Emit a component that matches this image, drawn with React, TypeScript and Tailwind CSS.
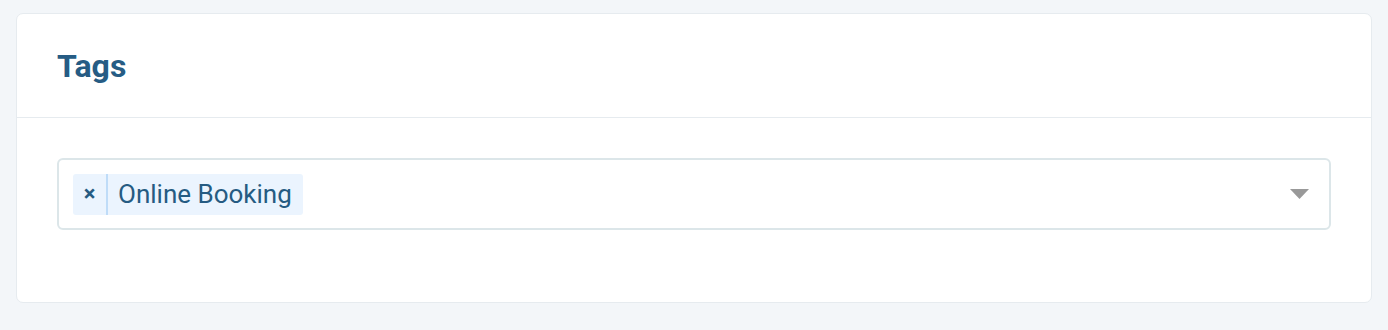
export default function App() {
  return (
    <div className="min-h-[330px] w-full bg-[#f3f6f9] px-4 pt-[13px] pb-7 font-['Roboto',sans-serif]">
      <div className="overflow-hidden rounded-[7px] border border-[#e6ebef] bg-white">
        {/* Header */}
        <div className="flex h-[104px] items-center border-b border-[#e6ebef] px-10">
          <h2 className="text-[32px] font-bold leading-none text-[#265c84]">Tags</h2>
        </div>
        {/* Body */}
        <div className="px-10 pt-10 pb-[72px]">
          <div className="flex h-[72px] items-center justify-between rounded-[6px] border-2 border-[#dce6e9] pl-[14px] pr-[20px]">
            <div className="flex h-[41px] items-stretch rounded-[3px] bg-[#ebf4fe] text-[#255b82]">
              <span className="flex w-[35px] items-center justify-center border-r-2 border-[#bfdcf8] text-[22px] font-bold leading-none">
                ×
              </span>
              <span className="flex items-center pl-[10px] pr-[11px] text-[26px] leading-none">Online Booking</span>
            </div>
            <svg width="19" height="10" viewBox="0 0 19 10">
              <path d="M0 0 L19 0 L9.5 10 Z" fill="#999999" />
            </svg>
          </div>
        </div>
      </div>
    </div>
  );
}
